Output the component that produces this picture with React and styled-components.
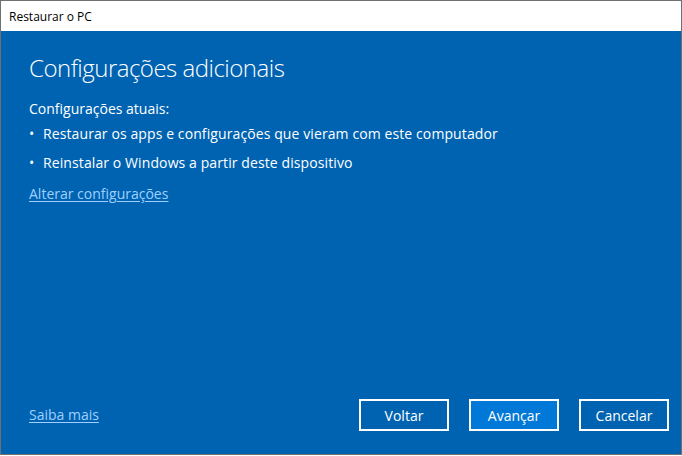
import React from 'react';
import styled, { createGlobalStyle } from 'styled-components';

const GlobalStyle = createGlobalStyle`
  html, body {
    margin: 0;
    padding: 0;
    background: #ffffff;
  }
  body {
    font-family: "Open Sans", "Noto Sans", "Liberation Sans", sans-serif;
  }
`;

const Window = styled.div`
  width: 682px;
  height: 455px;
  box-sizing: border-box;
  border: 1px solid #707070;
  display: flex;
  flex-direction: column;
`;

const TitleBar = styled.div`
  height: 30px;
  flex-shrink: 0;
  background: #ffffff;
  display: flex;
  align-items: center;
  padding-left: 8px;
  font-size: 12px;
  color: #000;
`;

const Body = styled.div`
  flex: 1;
  background: #0063b1;
  color: #ffffff;
  display: flex;
  flex-direction: column;
  padding: 0 12px 23px 28px;
`;

const Heading = styled.h1`
  margin: 12px 0 0;
  font-weight: 300;
  font-size: 24px;
  letter-spacing: -0.5px;
  line-height: 50px;
`;

const Text = styled.div`
  font-size: 14px;
  line-height: 20px;
  margin-top: 6px;
`;

const List = styled.ul`
  list-style: none;
  margin: 0;
  padding: 0;
`;

const Item = styled.li`
  font-size: 14px;
  letter-spacing: 0.1px;
  line-height: 29px;
  display: flex;

  &::before {
    content: "•";
    width: 14px;
  }
`;

const Link = styled.a`
  font-size: 14px;
  color: #9fd0ff;
  text-decoration: underline;
  text-underline-offset: 2px;
  line-height: 30px;
  cursor: pointer;
`;

const ChangeLink = styled(Link)`
  margin-top: 2px;
`;

const Spacer = styled.div`
  flex: 1;
`;

const Footer = styled.div`
  display: flex;
  align-items: center;
  justify-content: space-between;
`;

const Buttons = styled.div`
  display: flex;
  gap: 20px;
`;

const Button = styled.button`
  width: 90px;
  height: 32px;
  box-sizing: border-box;
  border: 2px solid #ffffff;
  background: ${p => (p.$primary ? '#0078d7' : 'transparent')};
  color: #ffffff;
  font-family: inherit;
  font-size: 14px;
  padding: 0;
`;

export default function App() {
  return (
    <>
      <GlobalStyle />
      <Window>
        <TitleBar>Restaurar o PC</TitleBar>
        <Body>
          <Heading>Configurações adicionais</Heading>
          <Text>Configurações atuais:</Text>
          <List>
            <Item>Restaurar os apps e configurações que vieram com este computador</Item>
            <Item>Reinstalar o Windows a partir deste dispositivo</Item>
          </List>
          <ChangeLink>Alterar configurações</ChangeLink>
          <Spacer />
          <Footer>
            <Link>Saiba mais</Link>
            <Buttons>
              <Button>Voltar</Button>
              <Button $primary>Avançar</Button>
              <Button>Cancelar</Button>
            </Buttons>
          </Footer>
        </Body>
      </Window>
    </>
  );
}
